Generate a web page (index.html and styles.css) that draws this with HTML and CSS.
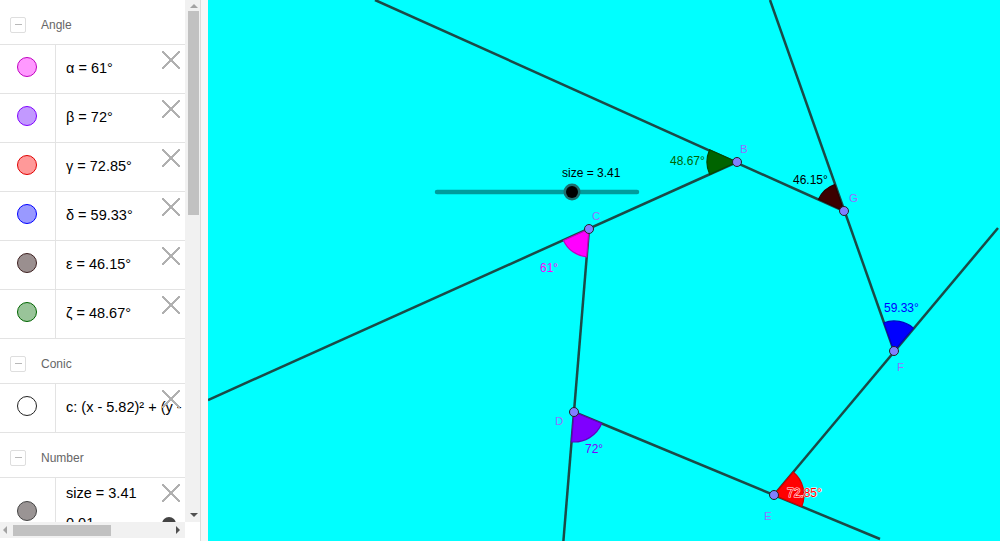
FILE: index.html
```html
<!DOCTYPE html>
<html>
<head>
<meta charset="utf-8">
<link rel="stylesheet" href="styles.css">
</head>
<body>
<div class="app">
  <div class="sidebar">
    <div class="list">
      <div class="group-head"><span class="toggle"><span class="dash"></span></span><span class="group-name">Angle</span></div>
      <div class="item"><div class="swatch-cell"><span class="swatch sw-alpha"></span></div><div class="expr">α = 61°</div><span class="del"></span></div>
      <div class="item"><div class="swatch-cell"><span class="swatch sw-beta"></span></div><div class="expr">β = 72°</div><span class="del"></span></div>
      <div class="item"><div class="swatch-cell"><span class="swatch sw-gamma"></span></div><div class="expr">γ = 72.85°</div><span class="del"></span></div>
      <div class="item"><div class="swatch-cell"><span class="swatch sw-delta"></span></div><div class="expr">δ = 59.33°</div><span class="del"></span></div>
      <div class="item"><div class="swatch-cell"><span class="swatch sw-eps"></span></div><div class="expr">ε = 46.15°</div><span class="del"></span></div>
      <div class="item"><div class="swatch-cell"><span class="swatch sw-zeta"></span></div><div class="expr">ζ = 48.67°</div><span class="del"></span></div>
      <div class="group-head"><span class="toggle"><span class="dash"></span></span><span class="group-name">Conic</span></div>
      <div class="item"><div class="swatch-cell"><span class="swatch sw-conic"></span></div><div class="expr">c: (x - 5.82)² + (y - 4.1)² = 11.6</div><span class="del"></span></div>
      <div class="group-head"><span class="toggle"><span class="dash"></span></span><span class="group-name">Number</span></div>
      <div class="item item-tall"><div class="swatch-cell"><span class="swatch sw-num"></span></div>
        <div class="num-body">
          <div class="expr expr-top">size = 3.41</div>
          <div class="num-slider"><span class="num-min">0.01</span><span class="num-track"><span class="num-knob"></span></span></div>
        </div>
        <span class="del"></span></div>
    </div>
    <div class="vscroll"><span class="arr arr-up"></span><span class="vthumb"></span><span class="arr arr-down"></span></div>
    <div class="hscroll"><span class="arr arr-left"></span><span class="hthumb"></span><span class="arr arr-right"></span></div>
    <div class="corner"></div>
  </div>
  <div class="splitter"></div>
  <div class="canvas">
    <svg class="board" width="792" height="541" viewBox="208 0 792 541">
      <g class="lines">
        <line x1="375" y1="0" x2="844" y2="211"/>
        <line x1="770" y1="0" x2="894" y2="351"/>
        <line x1="998" y1="228" x2="774" y2="495"/>
        <line x1="208" y1="400" x2="737" y2="162"/>
        <line x1="589" y1="229" x2="563.4" y2="541"/>
        <line x1="574" y1="412" x2="880" y2="539"/>
      </g>
      <path class="wedge w-zeta" d="M737,162 L709.67,174.37 A30,30 0 0 1 709.6,149.8 Z"/>
      <path class="wedge w-eps" d="M844,211 L818.5,199.3 A28,28 0 0 1 834.7,184.6 Z"/>
      <path class="wedge w-alpha" d="M589,229 L586.7,256.9 A28,28 0 0 1 563.5,240.5 Z"/>
      <path class="wedge w-delta" d="M894,351 L883.9,322.7 A30,30 0 0 1 913.4,328.1 Z"/>
      <path class="wedge w-beta" d="M574,412 L601.7,423.5 A30,30 0 0 1 571.5,441.9 Z"/>
      <path class="wedge w-gamma" d="M774,495 L793.2,472 A30,30 0 0 1 801.7,506.5 Z"/>

      <line class="slider-track" x1="437" y1="192" x2="637" y2="192"/>
      <circle class="slider-ring" cx="572" cy="192" r="8.5"/>
      <circle class="slider-knob" cx="572" cy="192" r="6"/>
      <text class="lbl" x="562" y="177">size = 3.41</text>

      <text class="lbl l-zeta" x="670" y="165">48.67°</text>
      <text class="lbl l-eps" x="793" y="184">46.15°</text>
      <text class="lbl l-alpha" x="540" y="272">61°</text>
      <text class="lbl l-delta" x="884" y="312">59.33°</text>
      <text class="lbl l-beta" x="585" y="453">72°</text>

      <g class="pts">
        <circle cx="737" cy="162" r="4.5"/>
        <circle cx="844" cy="211" r="4.5"/>
        <circle cx="589" cy="229" r="4.5"/>
        <circle cx="894" cy="351" r="4.5"/>
        <circle cx="574" cy="412" r="4.5"/>
        <circle cx="774" cy="495" r="4.5"/>
      </g>
      <text class="lbl l-gamma" x="787" y="497">72.85°</text>
      <text class="plbl" x="740" y="153">B</text>
      <text class="plbl" x="849" y="202">G</text>
      <text class="plbl" x="592" y="220">C</text>
      <text class="plbl" x="897" y="371">F</text>
      <text class="plbl" x="555" y="425">D</text>
      <text class="plbl" x="764" y="520">E</text>
    </svg>
  </div>
</div>
</body>
</html>
```
FILE: styles.css
```css
html, body { margin: 0; padding: 0; }
body { width: 1000px; height: 541px; overflow: hidden; background: #fff; font-family: "Liberation Sans", Arial, sans-serif; }
.app { display: flex; height: 541px; }

.sidebar {
  width: 200px; flex: none;
  display: grid;
  grid-template-columns: 185px 15px;
  grid-template-rows: 522px 16px 1fr;
  background: #fff;
}
.list { grid-column: 1; grid-row: 1; overflow: hidden; background: #fff; }

.group-head {
  border-bottom: 1px solid #e3e3e3;
  display: flex; align-items: center; box-sizing: border-box; padding-top: 5px;
  height: 45px;
}
.toggle {
  width: 14px; height: 14px; margin-left: 10px; margin-right: 15px;
  border: 1px solid #dedede; border-radius: 2px;
  display: flex; align-items: center; justify-content: center;
}
.dash { width: 7px; height: 1px; background: #b8b8b8; }
.group-name { font-size: 12px; color: #666; }

.item {
  height: 48px; border-bottom: 1px solid #e3e3e3;
  display: flex; position: relative; width: 185px;
}
.item-tall { height: 80px; }
.swatch-cell {
  width: 56px; flex: none; border-right: 1px solid #e3e3e3;
  display: flex; align-items: center; justify-content: center; padding-right: 1px; padding-bottom: 4px; box-sizing: border-box;
}
.swatch { width: 18px; height: 18px; border-radius: 50%; border: 1px solid #000; }
.sw-alpha { background: #ff99ff; border-color: #c000c0; }
.sw-beta { background: #c299ff; border-color: #7f00ff; }
.sw-gamma { background: #ff9999; border-color: #e00000; }
.sw-delta { background: #9999ff; border-color: #0000ff; }
.sw-eps { background: #9a8f8f; border-color: #3d2020; }
.sw-zeta { background: #99c499; border-color: #006400; }
.sw-conic { background: #fff; border-color: #222; }
.sw-num { background: #9a9494; border-color: #444; }
.item-tall .swatch-cell { align-items: flex-start; padding-top: 23px; padding-bottom: 0; }

.expr {
  font-size: 14.5px; color: #000; white-space: nowrap;
  display: flex; align-items: center; padding-left: 10px; padding-bottom: 3px;
}
.num-body { display: flex; flex-direction: column; }
.expr-top { height: 28px; padding-top: 1px; padding-bottom: 0; align-items: center; }
.num-slider { display: flex; align-items: center; padding-left: 10px; height: 30px; margin-top: 1px; }
.num-min { font-size: 14.5px; color: #000; width: 58px; }
.num-track { width: 120px; height: 2px; background: #666; position: relative; top: 2px; }
.num-knob { position: absolute; left: 38px; top: -7px; width: 14px; height: 14px; border-radius: 50%; background: #444; }

.del {
  position: absolute; right: 5px; top: 6px; width: 18px; height: 18px;
  background:
    linear-gradient(45deg, transparent calc(50% - 0.8px), #b0b0b0 calc(50% - 0.8px), #b0b0b0 calc(50% + 0.8px), transparent calc(50% + 0.8px)),
    linear-gradient(-45deg, transparent calc(50% - 0.8px), #b0b0b0 calc(50% - 0.8px), #b0b0b0 calc(50% + 0.8px), transparent calc(50% + 0.8px));
}

.vscroll {
  grid-column: 2; grid-row: 1; background: #f1f1f1;
  display: flex; flex-direction: column; align-items: center;
}
.vthumb { width: 11px; height: 204px; background: #c1c1c1; margin-top: 3px; margin-left: 2px; }
.arr { width: 0; height: 0; border: 4px solid transparent; }
.arr-up { border-bottom: 4px solid #a3a3a3; border-top: 0; margin-top: 4px; margin-left: 2px; }
.arr-down { border-top: 4px solid #505050; border-bottom: 0; margin-top: auto; margin-bottom: 5px; margin-left: 2px; }
.hscroll {
  grid-column: 1; grid-row: 2; background: #f1f1f1;
  display: flex; align-items: center;
}
.hthumb { width: 98px; height: 11px; background: #c1c1c1; margin-left: 6px; }
.arr-left { border-right: 4px solid #a3a3a3; border-left: 0; margin-left: 3px; }
.arr-right { border-left: 4px solid #505050; border-right: 0; margin-left: auto; margin-right: 5px; }
.corner { grid-column: 2; grid-row: 2; background: #fff; }

.splitter { width: 7px; flex: none; border-left: 1px solid #dcdcdc; background: #f7f7f7; }

.canvas { flex: 1; background: #00ffff; overflow: hidden; }
.board { display: block; }
.lines line { stroke: #1b4a47; stroke-width: 2.5; }
.wedge { stroke-width: 1.2; }
.w-zeta { fill: #006400; stroke: #004a00; }
.w-eps { fill: #3c0000; stroke: #2a0000; }
.w-alpha { fill: #ff00ff; stroke: #c000c0; }
.w-delta { fill: #0000ff; stroke: #0000c0; }
.w-beta { fill: #7f00ff; stroke: #6000c0; }
.w-gamma { fill: #ff0000; stroke: #d00000; }

.slider-track { stroke: #009c9c; stroke-width: 4.5; stroke-linecap: round; }
.slider-ring { fill: #1f6f6f; }
.slider-knob { fill: #000; }

.lbl { font-family: "Liberation Sans", Arial, sans-serif; font-size: 12px; fill: #000; }
.l-zeta { fill: #006400; }
.l-alpha { fill: #ff00ff; }
.l-delta { fill: #0000ff; }
.l-beta { fill: #7f00ff; }
.l-gamma { fill: #ff0000; stroke: #ffffff; stroke-width: 1px; paint-order: stroke fill; }
.pts circle { fill: #8080ff; stroke: #222; stroke-width: 1; }
.plbl { font-family: "Liberation Sans", Arial, sans-serif; font-size: 11.5px; fill: #9370ff; }
```
